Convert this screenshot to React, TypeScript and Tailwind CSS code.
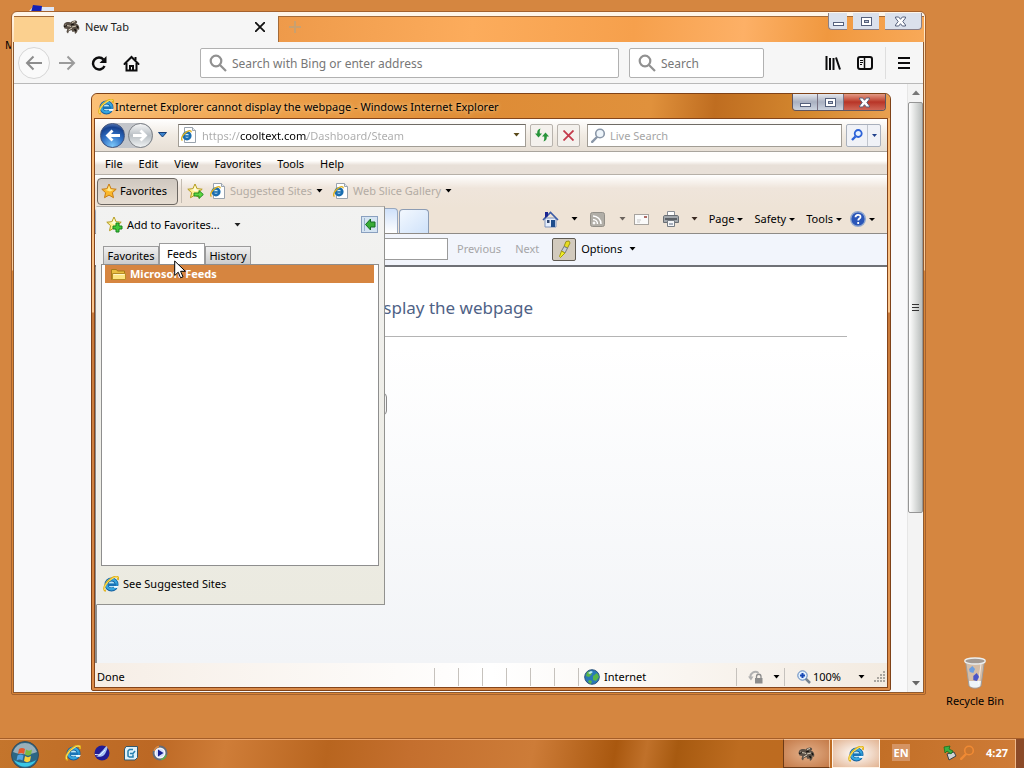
import type { ReactNode } from 'react';

const quickLaunch = ['Internet Explorer', 'SeaMonkey', 'Outlook Express', 'Media Player'];
const menus = ['File', 'Edit', 'View', 'Favorites', 'Tools', 'Help'];
const commands = ['Page', 'Safety', 'Tools'];

function Caret({ className = 'text-black' }: { className?: string }) {
  return (
    <svg className={`shrink-0 ${className}`} width="7" height="4" viewBox="0 0 7 4" aria-hidden="true">
      <path d="M.5 0h6l-3 3.500z" fill="currentColor" />
    </svg>
  );
}

function IeLogo({ size = 16 }: { size?: number }) {
  return (
    <svg className="shrink-0" width={size} height={size} viewBox="0 0 16 16" aria-hidden="true">
      <circle cx="8.500" cy="8.500" r="5" fill="#b9e6f8" stroke="#155f9f" strokeWidth="4" />
      <circle cx="8.500" cy="8.300" r="5" fill="none" stroke="#35a5dd" strokeWidth="2.400" />
      <path d="M5 7.400h8.500v2.600H5z" fill="#1873b6" />
      <path d="M10.500 10h5.300l-1.300 2-3.500-.2z" fill="#f2fafd" />
      <path d="M2.800 15C-1.200 14 2.600 6 9 2.200 12.500-.2 16.300 0 14.800 3.800" fill="none" stroke="#e2b41c" strokeWidth="2" />
      <path d="M1.700 14C.4 11 4 6 9 2.800 12 .8 14.500.5 14.800 2" fill="none" stroke="#fbe678" strokeWidth=".9" />
    </svg>
  );
}

function PageIcon() {
  return (
    <svg className="shrink-0" width="16" height="16" viewBox="0 0 16 16" aria-hidden="true">
      <path d="M3.500.5h8l3 3v12h-11z" fill="#fff" stroke="#9aa3ad" />
      <path d="M11.500.5v3h3" fill="#e3e8ee" stroke="#9aa3ad" />
      <circle cx="6" cy="8.800" r="3.300" fill="#d3eefa" stroke="#1a6db0" strokeWidth="2.600" />
      <path d="M3.500 8.200h6v1.600h-6z" fill="#1a6db0" />
      <path d="M1.500 13.500C-.8 12 2 6.500 6.500 4.300c2.500-1.100 4-.6 3.500 1" fill="none" stroke="#dfb11f" strokeWidth="1.300" />
    </svg>
  );
}

function Star({ badge }: { badge?: 'plus' | 'arrow' }) {
  return (
    <svg className="shrink-0" width="17" height="17" viewBox="0 0 17 17" aria-hidden="true">
      <path
        d="M8 1l2.100 4.700 5.100.5-3.800 3.500 1.100 5L8 12.100 3.500 14.700l1.100-5L.8 6.200l5.100-.5z"
        fill={badge ? '#fdf08c' : '#fbb82a'}
        stroke={badge ? '#b39a20' : '#c87c14'}
      />
      <path d="M8 2.500l1.400 3.800 3.600.5-4 1.800-5-1.800 2.600-.5z" fill={badge ? '#fffbd6' : '#ffe88c'} />
      {badge === 'plus' && <path d="M10 7h3v3h3v3h-3v3h-3v-3H7v-3h3z" fill="#3fc83a" stroke="#16821c" />}
      {badge === 'arrow' && <path d="M7 10h5V7.500l4.300 4L12 15.500V13H7z" fill="#5ed840" stroke="#218a20" />}
    </svg>
  );
}

function Magnifier({ size = 18, color = '#919191' }: { size?: number; color?: string }) {
  return (
    <svg className="shrink-0" width={size} height={size} viewBox="0 0 18 18" fill="none" stroke={color} strokeWidth="2.200" aria-hidden="true">
      <circle cx="7" cy="7" r="5.300" />
      <path d="M11 11l6 6" />
    </svg>
  );
}

function ReverseMagnifier({ color, lens, className = '' }: { color: string; lens: string; className?: string }) {
  return (
    <svg className={`shrink-0 ${className}`} width="15" height="15" viewBox="0 0 15 15" fill="none" stroke={color} aria-hidden="true">
      <path d="M6 9l-4.800 4.800" strokeWidth="2.400" strokeLinecap="round" />
      <circle cx="9" cy="5.500" r="4.300" fill={lens} strokeWidth="1.600" />
    </svg>
  );
}

function Gnu() {
  return (
    <svg className="shrink-0" width="18" height="16" viewBox="0 0 18 16" aria-hidden="true">
      <path d="M1 5c1.500-2 4-2.500 6.500-1.500C9 1.500 13 .5 14 2.500c.6 1.200-.5 2-1.500 2 3 .5 4.500 3.500 3.500 6.500l-1.500-1c.3 2-.5 4-2.500 5l-.5-2.500-2 .5-1-2-2.500 1L5 14.500 3.500 13l.7-3L1.500 9.500.5 7z" fill="#5a5046" />
      <path d="M2 6c2 1 4 .5 6 1.500M9 8l4-1M5.500 11L9 9M9 3.500l3-1" stroke="#d8cdb9" fill="none" />
      <path d="M1 7.500l3-1M11.500 10l1.500 2M14 7l1 2M8 6l3-1" stroke="#15110d" strokeWidth="1.300" />
    </svg>
  );
}

function Glyph({ kind, className = '' }: { kind: 'min' | 'max' | 'close'; className?: string }) {
  return (
    <svg className={className} width="13" height="11" viewBox="0 0 13 11" fill="#fff" stroke="#56617c" aria-hidden="true">
      {kind === 'min' && <rect x="1.500" y="6.500" width="10" height="3" />}
      {kind === 'max' && (
        <>
          <rect x="1.500" y="1.500" width="10" height="8" />
          <rect x="4.500" y="4.500" width="4" height="2" fill="#b9c2d4" />
        </>
      )}
      {kind === 'close' && <path d="M1.500 1h3.200l1.800 2.300L8.300 1h3.200v1L8.800 5.500l2.700 3.500v1H8.300L6.500 7.700 4.700 10H1.500V9l2.700-3.500L1.500 2z" />}
    </svg>
  );
}

function IconButton({ label, className = '', children }: { label: string; className?: string; children: ReactNode }) {
  return (
    <button type="button" aria-label={label} className={`flex shrink-0 items-center justify-center ${className}`}>
      {children}
    </button>
  );
}

function FirefoxToolbar() {
  return (
    <div className="flex h-[42px] shrink-0 items-center border-b border-[#b9b9b9] bg-[#f6f6f6] pt-px">
      <IconButton label="Back" className="ml-1 size-8 rounded-full border border-[#d6d6d6] bg-[#fafafa]">
        <svg width="18" height="16" viewBox="0 0 18 16" fill="none" stroke="#8d8d8d" strokeWidth="2">
          <path d="M17 8H2M8.500 1.500L2 8l6.500 6.500" />
        </svg>
      </IconButton>
      <IconButton label="Forward" className="ml-px w-8">
        <svg width="18" height="16" viewBox="0 0 18 16" fill="none" stroke="#9b9b9b" strokeWidth="2">
          <path d="M1 8h15M9.500 1.500L16 8l-6.500 6.500" />
        </svg>
      </IconButton>
      <IconButton label="Reload" className="w-8">
        <svg width="16" height="16" viewBox="0 0 16 16">
          <path d="M12.500 4.500A6 6 0 1 0 13.500 11" fill="none" stroke="#0c0c0d" strokeWidth="2.400" />
          <path d="M15.500 1v7H8.500z" fill="#0c0c0d" />
        </svg>
      </IconButton>
      <IconButton label="Home" className="w-8">
        <svg width="17" height="17" viewBox="0 0 17 17" fill="none" stroke="#0c0c0d" strokeWidth="2">
          <path d="M1.500 9l7-7 7 7" strokeLinecap="round" />
          <path d="M3.500 8v7.500h10V8" />
          <path d="M7 16v-5h3v5M12.500 2v3" />
        </svg>
      </IconButton>
      <label className="ml-[53px] flex h-[30px] flex-1 items-center gap-[5px] rounded-xs border border-[#b1b1b1] bg-white px-2">
        <Magnifier />
        <input type="text" aria-label="Address" placeholder="Search with Bing or enter address" className="w-full min-w-0 pt-0.5 text-[12px] outline-none placeholder:text-[#777]" />
      </label>
      <label className="ml-2.5 flex h-[30px] w-[135px] items-center gap-[5px] rounded-xs border border-[#b1b1b1] bg-white px-2">
        <Magnifier />
        <input type="text" aria-label="Search" placeholder="Search" className="w-full min-w-0 pt-0.5 text-[12px] outline-none placeholder:text-[#777]" />
      </label>
      <IconButton label="Library" className="ml-[53px] w-8">
        <svg width="16" height="14" viewBox="0 0 16 14" fill="none" stroke="#0c0c0d" strokeWidth="2">
          <path d="M1.500 0v14M5 2v12M8.500 2v12M11 1.500l4 12" />
        </svg>
      </IconButton>
      <IconButton label="Sidebars" className="w-8">
        <svg width="16" height="14" viewBox="0 0 16 14" fill="none" stroke="#0c0c0d">
          <rect x="1" y="1" width="14" height="12" rx="2" strokeWidth="2" />
          <path d="M7.500 1v12" strokeWidth="1.500" />
          <path d="M3 4.500h3M3 6.500h3M3 8.500h2" />
        </svg>
      </IconButton>
      <span className="ml-1 h-8 w-px bg-[#dedede]" />
      <IconButton label="Open menu" className="mr-0.5 w-[35px]">
        <svg width="12" height="12" viewBox="0 0 12 12" stroke="#0c0c0d" strokeWidth="2">
          <path d="M0 1h12M0 6h12M0 11h12" />
        </svg>
      </IconButton>
    </div>
  );
}

function FirefoxWindow() {
  return (
    <section
      aria-label="New Tab"
      className="absolute top-[11px] right-[98px] bottom-[73px] left-[11px] flex flex-col rounded-t-md rounded-b-xs border border-[#a5622e] bg-[linear-gradient(#fff5e8_0,#fff5e8_4px,#ffdfb5_30px,#fbcb98_258px,#d98537_259px)] px-px pb-px"
    >
      <div className="flex h-[30px] shrink-0 items-stretch">
        <div className="mt-1 ml-px w-10 border-t border-[#a36a38] bg-[#fbd08f]" />
        <div className="flex w-[224px] items-center bg-[#f6f6f6] pr-2.5 pl-[9px]">
          <Gnu />
          <h2 className="ml-1 flex-1 text-[11px] text-[#222]">New Tab</h2>
          <IconButton label="Close tab" className="size-4">
            <svg width="10" height="10" viewBox="0 0 10 10" stroke="#111" strokeWidth="1.800">
              <path d="M0 0l10 10M10 0L0 10" />
            </svg>
          </IconButton>
        </div>
        <div className="mt-1 flex flex-1 items-start justify-between border-t border-l border-[#a36a38] bg-[linear-gradient(95deg,#ee9a4a,#fcac5c_30%,#f6a04c_55%,#fdb066_72%,#f0983f_85%,#f8a958)]">
          <IconButton label="Open a new tab" className="mt-0.5 ml-2 size-4">
            <svg width="12" height="12" viewBox="0 0 12 12" stroke="#c9a06f" strokeWidth="2">
              <path d="M6 0v12M0 6h12" />
            </svg>
          </IconButton>
          <div className="-mt-1 mr-0.5 flex h-[17px] gap-1.5">
            <IconButton label="Minimize" className="w-[19px] rounded-bl-sm border-b border-l border-[#8a7f86] bg-[#dbe1ec]"><Glyph kind="min" /></IconButton>
            <IconButton label="Maximize" className="w-[26px] border-b border-[#8a7f86] bg-[#dbe1ec]"><Glyph kind="max" /></IconButton>
            <IconButton label="Close" className="w-[37px] rounded-br-sm border-r border-b border-[#8a7f86] bg-[#dbe1ec] pr-1.5"><Glyph kind="close" /></IconButton>
          </div>
        </div>
      </div>
      <div className="flex min-h-0 flex-1 flex-col border border-t-0 border-[#8f5a30]">
        <FirefoxToolbar />
        <div className="flex min-h-0 flex-1 justify-end bg-[#f9f9fa]">
          <div className="flex w-4 flex-col items-center border-l border-[#e6e6e6] bg-[#f3f3f3]">
            <svg className="my-1.5 shrink-0" width="8" height="5" viewBox="0 0 8 5"><path d="M0 5l4-4.500L8 5z" fill="#777" /></svg>
            <div className="mt-px flex h-[411px] w-full items-center justify-center rounded-xs border border-[#959595] bg-linear-to-r from-white via-[#dcdedd] to-[#b9bdbc]">
              <svg width="7" height="9" viewBox="0 0 7 9" stroke="#333"><path d="M0 1.500h7M0 4.500h7M0 7.500h7" /></svg>
            </div>
            <svg className="mt-auto mb-1.5 shrink-0" width="8" height="5" viewBox="0 0 8 5"><path d="M0 0l4 4.500L8 0z" fill="#666" /></svg>
          </div>
        </div>
      </div>
    </section>
  );
}

function NavigationBar() {
  return (
    <div className="flex h-[33px] shrink-0 items-center border-b border-[#a9a49c] bg-linear-to-b from-white via-[#f1ebe3] to-[#e7dfd5] pr-1.5 pl-[5px]">
      <div className="flex items-center gap-[3px] rounded-full bg-[#c2c5ca]">
        <IconButton label="Back" className="size-[25px] rounded-full border border-[#42547c] bg-[radial-gradient(circle_at_50%_95%,#7cc8fa,#2f6fc4_45%,#16418e_75%,#7d9cd0)]">
          <svg width="15" height="13" viewBox="0 0 15 13" fill="none" stroke="#fff" strokeWidth="2.800"><path d="M15 6.500H3M7.500 1.500l-5 5 5 5" /></svg>
        </IconButton>
        <IconButton label="Forward" className="size-[25px] rounded-full border border-[#7d8186] bg-linear-to-b from-[#f5f6f7] via-[#b9bfc4] to-[#f0f3f4]">
          <svg width="15" height="13" viewBox="0 0 15 13" fill="none" stroke="#fff" strokeWidth="2.800"><path d="M0 6.500h12M7.500 1.500l5 5-5 5" /></svg>
        </IconButton>
      </div>
      <IconButton label="Recent pages" className="ml-px w-4">
        <svg width="9" height="6" viewBox="0 0 9 6"><path d="M.5.5h8l-4 4.500z" fill="#3a82cc" stroke="#173f77" /></svg>
      </IconButton>
      <div className="ml-2 flex h-[23px] flex-1 items-center border border-[#a29d95] border-t-[#6f6b65] bg-white pr-[5px] pl-0.5">
        <PageIcon />
        <input
          type="text"
          aria-label="Address"
          defaultValue="https://cooltext.com/Dashboard/Steam"
          className="ml-[5px] min-w-0 flex-1 bg-[linear-gradient(90deg,#aaa_38px,#000_38px,#000_105px,#aaa_105px)] bg-clip-text pt-0.5 text-[11px] text-transparent outline-none"
        />
        <Caret className="text-[#5a4a1a]" />
      </div>
      <IconButton label="Refresh" className="ml-1 size-[23px] rounded-xs border border-[#b8b3ad] bg-[#f4f1ed]">
        <svg width="14" height="14" viewBox="0 0 14 14" fill="#27943a">
          <path d="M5.500.5C3 1 2 3 2.200 5.500H0L3.500 9.500 7 5.500H4.800C4.600 3.500 4.800 2 5.500.5z" />
          <path d="M8.500 13.500c2.500-.5 3.500-2.500 3.300-5H14l-3.500-4L7 8.500h2.200c.2 2 0 3.500-.7 5z" />
        </svg>
      </IconButton>
      <IconButton label="Stop" className="ml-1 size-[23px] rounded-xs border border-[#b8b3ad] bg-[#f4f1ed]">
        <svg width="11" height="11" viewBox="0 0 11 11" stroke="#c43a4c" strokeWidth="1.800"><path d="M.5.5l10 10M10.500.5l-10 10" /></svg>
      </IconButton>
      <label className="ml-[7px] flex h-[23px] w-[255px] items-center gap-1 border border-[#a29d95] border-t-[#6f6b65] bg-white px-[3px]">
        <ReverseMagnifier color="#8a97a8" lens="#eef5fb" />
        <input type="text" aria-label="Live Search" placeholder="Live Search" className="min-w-0 flex-1 pt-0.5 text-[11px] outline-none placeholder:text-[#a5a5a5]" />
      </label>
      <div className="ml-1 flex h-[23px] rounded-xs border border-[#a9b0bc] bg-[#f0f2f7]">
        <IconButton label="Search" className="w-[21px] border-r border-[#c0c5cd]">
          <svg width="12" height="12" viewBox="0 0 12 12" fill="none" stroke="#2c62d8"><path d="M4.500 7.500L1 11" strokeWidth="2.400" /><circle cx="7.200" cy="4.500" r="3.500" fill="#e6f1ff" strokeWidth="1.800" /></svg>
        </IconButton>
        <IconButton label="Search options" className="w-3">
          <svg width="5" height="3" viewBox="0 0 5 3"><path d="M0 0h5L2.500 3z" fill="#20418c" /></svg>
        </IconButton>
      </div>
    </div>
  );
}

function FavoritesBar() {
  return (
    <div className="flex h-[33px] shrink-0 items-center bg-linear-to-b from-white via-[#efe5db] via-40% to-[#eee3d6] pb-px pl-0.5">
      <button type="button" className="flex h-[27px] w-[81px] items-center gap-0.5 rounded-sm border border-[#6c6762] bg-linear-to-b from-[#cfc8c0] to-[#e6ddd2] pl-[3px]">
        <Star />
        Favorites
      </button>
      <span className="mx-[3px] h-6 w-px bg-[#c4bcb2]" />
      <IconButton label="Add to Favorites Bar" className="ml-0.5"><Star badge="arrow" /></IconButton>
      <button type="button" className="ml-1.5 flex items-center gap-1 text-[#b3aca4]">
        <PageIcon />
        Suggested Sites
        <Caret />
      </button>
      <button type="button" className="ml-2.5 flex items-center gap-1 text-[#b3aca4]">
        <PageIcon />
        Web Slice Gallery
        <Caret />
      </button>
    </div>
  );
}

function CommandBar() {
  return (
    <div className="flex h-[26px] shrink-0 items-center justify-between border-b border-[#8f8b86] bg-[#eee3d6] pr-3">
      <div className="flex items-end gap-px self-stretch">
        <div className="h-[25px] w-[303px] rounded-t-sm border border-b-0 border-[#98a8bf] bg-linear-to-b from-[#cfe1fa] to-white" />
        <button type="button" aria-label="New Tab" className="h-6 w-[30px] rounded-t-sm border border-b-0 border-[#8c9cb4] bg-linear-to-br from-[#f3f8fe] to-[#cfe2fa]" />
      </div>
      <div className="flex items-center pb-[3px]">
        <IconButton label="Home" className="gap-3">
          <svg width="17" height="17" viewBox="0 0 17 17">
            <path d="M3 7h11v9H3z" fill="#e6eefc" stroke="#7e93bb" />
            <path d="M1 9l7.500-7.500L16 9" fill="none" stroke="#3b5ba6" strokeWidth="1.600" />
            <path d="M3 1h3v4L3 7z" fill="#1b2590" />
            <path d="M9 9h4v7H9z" fill="#1e4d8c" />
            <path d="M5 9h2.500v3H5z" fill="#31476f" />
          </svg>
          <Caret />
        </IconButton>
        <IconButton label="Feeds" className="ml-3 gap-3.5">
          <svg width="15" height="15" viewBox="0 0 15 15" fill="none" stroke="#fff">
            <rect x=".5" y=".5" width="14" height="14" rx="2" fill="#b1aea7" stroke="#928f88" />
            <path d="M3 4a8 8 0 0 1 8 8M3 7.500A4.500 4.500 0 0 1 7.500 12" strokeWidth="1.500" />
            <circle cx="4" cy="11" r="1" fill="#fff" />
          </svg>
          <Caret className="text-[#6a625c]" />
        </IconButton>
        <IconButton label="Read mail" className="ml-2">
          <svg width="15" height="11" viewBox="0 0 15 11">
            <rect x=".5" y=".5" width="14" height="10" fill="#fafafa" stroke="#a7a39e" />
            <path d="M3 6h4M3 8h3" stroke="#c9c9c9" />
            <path d="M10 2h3v2h-3z" fill="#b06c66" />
          </svg>
        </IconButton>
        <IconButton label="Print" className="ml-3.5 gap-3">
          <svg width="16" height="16" viewBox="0 0 16 16">
            <path d="M4.500.5h7V5h-7z" fill="#fff" stroke="#8a8f96" />
            <path d="M.5 6c0-1 .5-1.500 1.500-1.500h12c1 0 1.500.5 1.500 1.500v5.500H.5z" fill="#a3a8ad" stroke="#696e74" />
            <path d="M2 8h12" stroke="#454a50" strokeWidth="1.500" />
            <path d="M4.500 9.500h7v6h-7z" fill="#f4f6f8" stroke="#777d84" />
            <path d="M6 13h4" stroke="#5d6a84" />
          </svg>
          <Caret className="text-[#3a2a22]" />
        </IconButton>
        {commands.map((name) => (
          <button key={name} type="button" className="ml-[11px] flex items-center gap-[3px]">
            {name}
            <svg width="6" height="3" viewBox="0 0 6 3" aria-hidden="true"><path d="M0 0h6L3 3z" /></svg>
          </button>
        ))}
        <IconButton label="Help" className="ml-2 gap-[3px]">
          <svg width="16" height="16" viewBox="0 0 16 16">
            <circle cx="8" cy="8" r="7.300" fill="#2b56b8" stroke="#92a9cf" strokeWidth="1.400" />
            <path d="M5.500 6.300c0-3.300 5-3.200 5-.4 0 1.700-2.300 1.600-2.300 3.600M8.200 11v2" fill="none" stroke="#fff" strokeWidth="1.800" />
          </svg>
          <svg width="6" height="3" viewBox="0 0 6 3"><path d="M0 0h6L3 3z" /></svg>
        </IconButton>
      </div>
    </div>
  );
}

function FindBar() {
  return (
    <div className="flex h-[33px] shrink-0 items-center border-b-2 border-[#6f7176] bg-[#f2f5fc] pb-px">
      <input type="text" aria-label="Find" className="ml-[151px] h-[22px] w-[202px] border border-[#9b9b9b] bg-white px-1 outline-none" />
      <button type="button" className="ml-[9px] text-[#a6a6a8]">Previous</button>
      <button type="button" className="ml-3.5 text-[#a6a6a8]">Next</button>
      <IconButton label="Highlight all matches" className="ml-[13px] h-[23px] w-6 rounded-xs border border-[#5f5a52] bg-[#d2cabd]">
        <svg width="16" height="19" viewBox="0 0 16 19">
          <path d="M10 1.500l3-.5 1 2-2.500 5-3.500-1.500z" fill="#e8dc20" stroke="#9a9418" />
          <path d="M8 6.500l3.500 1.500-2.500 5L5.500 11z" fill="#c9ced4" stroke="#757b83" />
          <path d="M5.500 11L9 13l-4.500 4.500-1-1z" fill="#f2ef26" stroke="#a39b10" />
        </svg>
      </IconButton>
      <button type="button" className="ml-[5px] flex items-center gap-[7px]">
        Options
        <Caret />
      </button>
    </div>
  );
}

function StatusBar() {
  return (
    <footer className="flex h-6 shrink-0 items-center bg-linear-to-r from-[#f6eee6] via-white to-[#f3ebe1] pt-[3px] pl-0.5">
      <span className="flex-1">Done</span>
      <div className="flex h-[18px]">
        {[1, 2, 3, 4, 5, 6].map((n) => (
          <span key={n} className="w-6 border-l border-[#c6c2bd]" />
        ))}
      </div>
      <div className="flex h-[18px] w-[158px] items-center gap-1 border-l border-[#c6c2bd] pl-[5px]">
        <svg width="16" height="16" viewBox="0 0 16 16" aria-hidden="true">
          <circle cx="8" cy="8" r="7.300" fill="#2a78b8" stroke="#2b547c" />
          <path d="M3 3l4-1 1 3-3 3-3-1zM9 7l4-3 2 4-3 4-3-1zM5 11l3 1-1 3-3-2z" fill="#58b648" />
          <path d="M4 4l3-2 2 1-3 2z" fill="#bfe8fb" />
        </svg>
        Internet
      </div>
      <div className="flex h-[18px] w-12 items-center justify-between border-l border-[#c6c2bd] pr-1 pl-[11px]">
        <svg width="16" height="14" viewBox="0 0 16 14" aria-hidden="true">
          <path d="M2.500 8a5 5 0 0 1 8-5" fill="none" stroke="#b1b1b1" strokeWidth="2" />
          <path d="M0 6.500h5.500L3 10.500z" fill="#b1b1b1" />
          <path d="M8.500 8V6.500a2 2 0 0 1 4.500 0V8" fill="none" stroke="#8c8c8c" strokeWidth="1.300" />
          <path d="M7 8h7.500v5.500H7z" fill="#8c8c8c" />
        </svg>
        <Caret />
      </div>
      <div className="flex h-[18px] items-center border-l border-[#c6c2bd] pl-3">
        <svg width="14" height="14" viewBox="0 0 14 14" aria-hidden="true">
          <path d="M8 8l5 5" stroke="#77838f" strokeWidth="2.500" />
          <circle cx="5.500" cy="5.500" r="4.700" fill="#e1effd" stroke="#5a83bb" />
          <path d="M5.500 3v5M3 5.500h5" stroke="#1647b5" strokeWidth="2" />
        </svg>
        <button type="button" className="ml-0.5 flex items-center gap-[17px]">
          100%
          <Caret />
        </button>
        <svg className="mr-0.5 ml-2" width="12" height="12" viewBox="0 0 12 12" fill="#aaa6a0" aria-hidden="true">
          <path d="M10 0h2v2h-2zM10 3h2v2h-2zM10 6h2v2h-2zM10 9h2v2h-2zM7 3h2v2H7zM7 6h2v2H7zM7 9h2v2H7zM4 6h2v2H4zM4 9h2v2H4zM1 9h2v2H1z" />
        </svg>
      </div>
    </footer>
  );
}

function FavoritesCenter() {
  return (
    <aside className="absolute top-[87px] left-px flex h-[399px] w-[289px] flex-col border border-t-[#b5b1ab] border-r-[#92928f] border-b-[#92928f] border-l-[#eeeeea] bg-linear-to-b from-[#f2f2f1] to-[#ebeae0] pr-[5px] pl-1">
      <div className="flex h-[35px] shrink-0 items-center pr-px pl-[5px]">
        <button type="button" className="flex items-center gap-1">
          <Star badge="plus" />
          Add to Favorites...
          <Caret className="ml-2.5 text-[#222]" />
        </button>
        <IconButton label="Pin the Favorites Center" className="ml-auto size-[17px] border border-[#8aa0bf] bg-[#d5e4f2]">
          <svg width="13" height="13" viewBox="0 0 13 13"><path d="M2.500 6.500L7.500 1v3H12v5H7.500v3z" fill="#39ac37" stroke="#146c24" /><path d="M1.500 0v13" stroke="#9ab3ce" /></svg>
        </IconButton>
      </div>
      <div role="tablist" className="mt-px flex h-[21px] shrink-0 items-end pl-0.5">
        <button type="button" role="tab" className="h-[18px] w-14 border border-b-0 border-[#9b9b9b] bg-linear-to-b from-[#f0f0f0] to-[#cccccc] leading-4">Favorites</button>
        <button type="button" role="tab" aria-selected="true" className="h-[21px] w-[46px] border border-b-0 border-[#9b9b9b] bg-white leading-4">Feeds</button>
        <button type="button" role="tab" className="h-[18px] w-[46px] border border-b-0 border-[#9b9b9b] bg-linear-to-b from-[#f0f0f0] to-[#cccccc] leading-4">History</button>
      </div>
      <div role="tabpanel" className="min-h-0 flex-1 border border-[#8e8e8e] bg-white pr-1 pl-[3px]">
        <button type="button" className="flex h-[18px] w-full items-center gap-1 bg-[#d68540] pl-1.5 font-bold text-white">
          <svg width="15" height="12" viewBox="0 0 15 12" aria-hidden="true">
            <path d="M.5 1.500h5l1 1.500h7v8.500H.5z" fill="#e9bf42" stroke="#a87a18" />
            <path d="M1.500 5.500h13v6h-13z" fill="#fde481" stroke="#b78c24" />
            <path d="M2.500 6.500h11" stroke="#fff6c8" />
          </svg>
          Microsoft Feeds
        </button>
      </div>
      <a href="#suggested" className="flex h-[38px] shrink-0 items-center gap-1 pb-[3px] pl-0.5">
        <IeLogo />
        See Suggested Sites
      </a>
    </aside>
  );
}

function ExplorerWindow() {
  return (
    <section
      aria-label="Windows Internet Explorer"
      className="absolute top-[93px] right-[133px] bottom-[77px] left-[91px] flex flex-col rounded-t-md rounded-b-xs border border-[#7f4218] bg-[linear-gradient(#f9b870_0,#fbc78f_218px,#c97a3a_219px,#dc8b48)] px-0.5 pb-0.5"
    >
      <header className="-mx-0.5 flex h-6 shrink-0 items-start justify-between rounded-t-md bg-[linear-gradient(95deg,#fbc077,#eda04a_22%,#de8c36_50%,#e0913c_70%,#bf6d20_78%,#d58930_90%,#e9a050)] pl-1.5">
        <h1 className="flex h-6 items-center gap-px pt-0.5 whitespace-nowrap [text-shadow:0_0_4px_#ffe0b0]">
          <IeLogo />
          Internet Explorer cannot display the webpage - Windows Internet Explorer
        </h1>
        <div className="mr-1 flex h-[17px] overflow-hidden rounded-b-sm border border-t-0 border-[#5f5560]">
          <IconButton label="Minimize" className="w-[25px] border-r border-[#777081] bg-linear-to-b from-[#e6e8ee] via-[#a9b0c0] to-[#ccd3df]"><Glyph kind="min" /></IconButton>
          <IconButton label="Maximize" className="w-[26px] border-r border-[#777081] bg-linear-to-b from-[#e6e8ee] via-[#a9b0c0] to-[#ccd3df]"><Glyph kind="max" /></IconButton>
          <IconButton label="Close" className="w-[41px] bg-linear-to-b from-[#e39a85] via-[#b83427] to-[#cf6656]"><Glyph kind="close" /></IconButton>
        </div>
      </header>
      <div className="relative flex min-h-0 flex-1 flex-col border border-[#84451b] bg-white">
        <NavigationBar />
        <nav className="flex h-[23px] shrink-0 items-center border-b border-[#b6b0a8] bg-linear-to-b from-[#fffefc] from-40% to-[#e8e0d8] to-60% pt-0.5 pl-0.5">
          {menus.map((name) => (
            <button key={name} type="button" className="px-2">{name}</button>
          ))}
        </nav>
        <FavoritesBar />
        <CommandBar />
        <FindBar />
        <main className="min-h-0 flex-1 border-l-2 border-[#8c8c8c] bg-linear-to-b from-white from-20% to-[#f2f4f7] pt-7 pr-10 pl-[71px]">
          <h2 className="border-b border-[#b4b4b4] pb-4 text-[17px] leading-[25px] text-[#4f6286]">Internet Explorer cannot display the webpage</h2>
          <button type="button" aria-label="Diagnose connection problems" className="mt-14 block h-[22px] w-[219px] rounded-sm border border-[#8a8a8a] bg-[#f4f4f4]" />
        </main>
        <StatusBar />
        <FavoritesCenter />
      </div>
    </section>
  );
}

function Taskbar() {
  return (
    <footer className="relative flex h-[30px] shrink-0 items-center border-t border-[#a55d28] bg-[linear-gradient(100deg,#c4752c,#bc6824_15%,#cf7d38_22%,#b8651f_32%,#c46f2e_40%,#cd7c38_52%,#a9580f_60%,#c0712a_63%,#a75a10_66%,#bd6c20_72%,#bd6a20_80%,#cf7c38)] text-white shadow-[inset_0_1px_#eba66e]">
      <IconButton label="Start" className="ml-2.5">
        <svg width="30" height="28" viewBox="0 0 30 28">
          <circle cx="15" cy="15" r="13.500" fill="#2c6684" stroke="#3f4b54" />
          <path d="M3 12a12.500 12.500 0 0 1 24 0c-7 3-17 3-24 0z" fill="#b5c2c8" opacity=".8" />
          <path d="M4 20c4 9 18 9 22 0-5 4-17 4-22 0z" fill="#39c7e6" />
          <path d="M9 9c2-1.500 4-1.500 6 0l-1 5c-2-1.500-4-1.500-6 0z" fill="#e4572c" />
          <path d="M16 9.500c2 1.500 4 1.500 6 0l-1 5c-2 1.500-4 1.500-6 0z" fill="#7cba3f" />
          <path d="M7.500 15.500c2-1.500 4-1.500 6 0l-1 5c-2-1.500-4-1.500-6 0z" fill="#54a5e2" />
          <path d="M15 16c2 1.500 4 1.500 6 0l-1 5c-2 1.500-4 1.500-6 0z" fill="#fbd13a" />
        </svg>
      </IconButton>
      <div className="ml-[25px] flex gap-[13px] pb-0.5">
        {quickLaunch.map((name, index) => (
          <IconButton key={name} label={name}>
            {index === 0 && <IeLogo />}
            {index === 1 && (
              <svg width="16" height="16" viewBox="0 0 16 16">
                <circle cx="8" cy="8" r="7.500" fill="#221c94" />
                <path d="M2 12c2-.5 3-3 5-5 2-1.500 3-4 6-6 1 2-.5 5-1.500 7s-2 3-4 3.500-3.500 0-5.500.5z" fill="#a8c4f4" />
                <path d="M1 9.500l5 .5 5-5" stroke="#e7f0ff" fill="none" />
              </svg>
            )}
            {index === 2 && (
              <svg width="16" height="16" viewBox="0 0 16 16">
                <path d="M3 1.500h11.500v11L12 15H1.500V4z" fill="#dff1f9" stroke="#33586c" />
                <path d="M10 4.500H6.500L5 6v5l1.500 1H10V9.500M7 8.500h3l2-2.500" fill="none" stroke="#267fae" strokeWidth="1.500" />
              </svg>
            )}
            {index === 3 && (
              <svg width="16" height="16" viewBox="0 0 16 16">
                <circle cx="8" cy="8" r="6.500" fill="#f4f6ff" stroke="#646c79" strokeWidth="2" />
                <path d="M2 6a6.500 6.500 0 0 1 5-4.500" stroke="#e88b38" strokeWidth="1.500" fill="none" />
                <path d="M14 10a6.500 6.500 0 0 1-5 4.500" stroke="#60ad4a" strokeWidth="1.500" fill="none" />
                <circle cx="8" cy="8" r="4" fill="#d4def8" />
                <path d="M6 4.500L11.500 8 6 11.500z" fill="#161f91" />
              </svg>
            )}
          </IconButton>
        ))}
      </div>
      <div className="ml-auto flex gap-0.5 self-stretch">
        <IconButton label="New Tab" className="w-[47px] border border-[#6e3b16] border-t-[#f0c6a2] border-r-[#f0c6a2] bg-[radial-gradient(#e3b08a,#c47a48)]"><Gnu /></IconButton>
        <IconButton label="Internet Explorer" className="w-12 border border-[#fff3e6] bg-[radial-gradient(#ffffff,#e2b391)]"><IeLogo /></IconButton>
      </div>
      <button type="button" aria-label="Input language" className="mb-0.5 ml-3 flex h-[17px] w-[18px] items-center justify-center bg-[#d59463] text-[11px] font-bold">EN</button>
      <div className="mb-0.5 ml-8 flex gap-0.5">
        <svg width="16" height="16" viewBox="0 0 16 16" aria-hidden="true">
          <path d="M5 9l7-2 2 4-7 4z" fill="#cfd3d6" stroke="#3d4348" />
          <path d="M2 2l6-1-1 3 4 2-2 3-4-3-2 2z" fill="#3bb044" stroke="#16701f" strokeWidth=".8" />
        </svg>
        <ReverseMagnifier color="#f08a34" lens="#c9762f" />
      </div>
      <time className="mb-0.5 ml-[11px] text-[11px] font-bold">4:27</time>
      <button type="button" aria-label="Show desktop" className="ml-[7px] w-[9px] self-stretch border-l border-[#f0b98c] bg-[#8b4a28]" />
    </footer>
  );
}

export default function App() {
  return (
    <div className="relative flex h-screen flex-col overflow-hidden bg-[#d58640] font-['Noto_Sans','Open_Sans',sans-serif] text-[11px] leading-4 text-black">
      <div className="relative min-h-0 flex-1">
        <svg className="absolute top-1 left-7" width="26" height="14" viewBox="0 0 26 14" aria-hidden="true">
          <path d="M0 8l5-5h21v11H0z" fill="#dfe6f5" />
          <path d="M5 1l9 1-1 8-10-2z" fill="#1420b4" />
        </svg>
        <span className="absolute top-[37px] left-[5px]">M</span>
        <button type="button" className="absolute right-5 bottom-[29px] flex w-[58px] flex-col items-center gap-1 whitespace-nowrap">
          <svg width="24" height="32" viewBox="0 0 28 32" preserveAspectRatio="none" aria-hidden="true">
            <path d="M3 4h22l-4 25c-4 3-10 3-14 0z" fill="#d3cfca" fillOpacity=".75" stroke="#9a9da0" />
            <ellipse cx="14" cy="4" rx="12" ry="3" fill="#a49a92" stroke="#eceff0" strokeWidth="1.500" />
            <path d="M7 24h14l-1 5c-3 2-9 2-12 0z" fill="#eef5f8" />
            <path d="M7 12l4-3 3 3-2 4-4-1z" fill="#6d9fe0" />
            <path d="M12 19l4-3 3 4-3 4-4-1z" fill="#4a55c8" />
            <path d="M21 7l-3 20" stroke="#fff" strokeOpacity=".7" />
          </svg>
          Recycle Bin
        </button>
      </div>
      <Taskbar />
      <FirefoxWindow />
      <ExplorerWindow />
      <svg className="absolute top-[260px] left-[174px]" width="13" height="20" viewBox="0 0 13 20" aria-hidden="true">
        <path d="M.7 1v14.500l3.500-3.300 2.400 5.600 2.400-1-2.400-5.500h4.800z" fill="#fff" stroke="#000" />
      </svg>
    </div>
  );
}
